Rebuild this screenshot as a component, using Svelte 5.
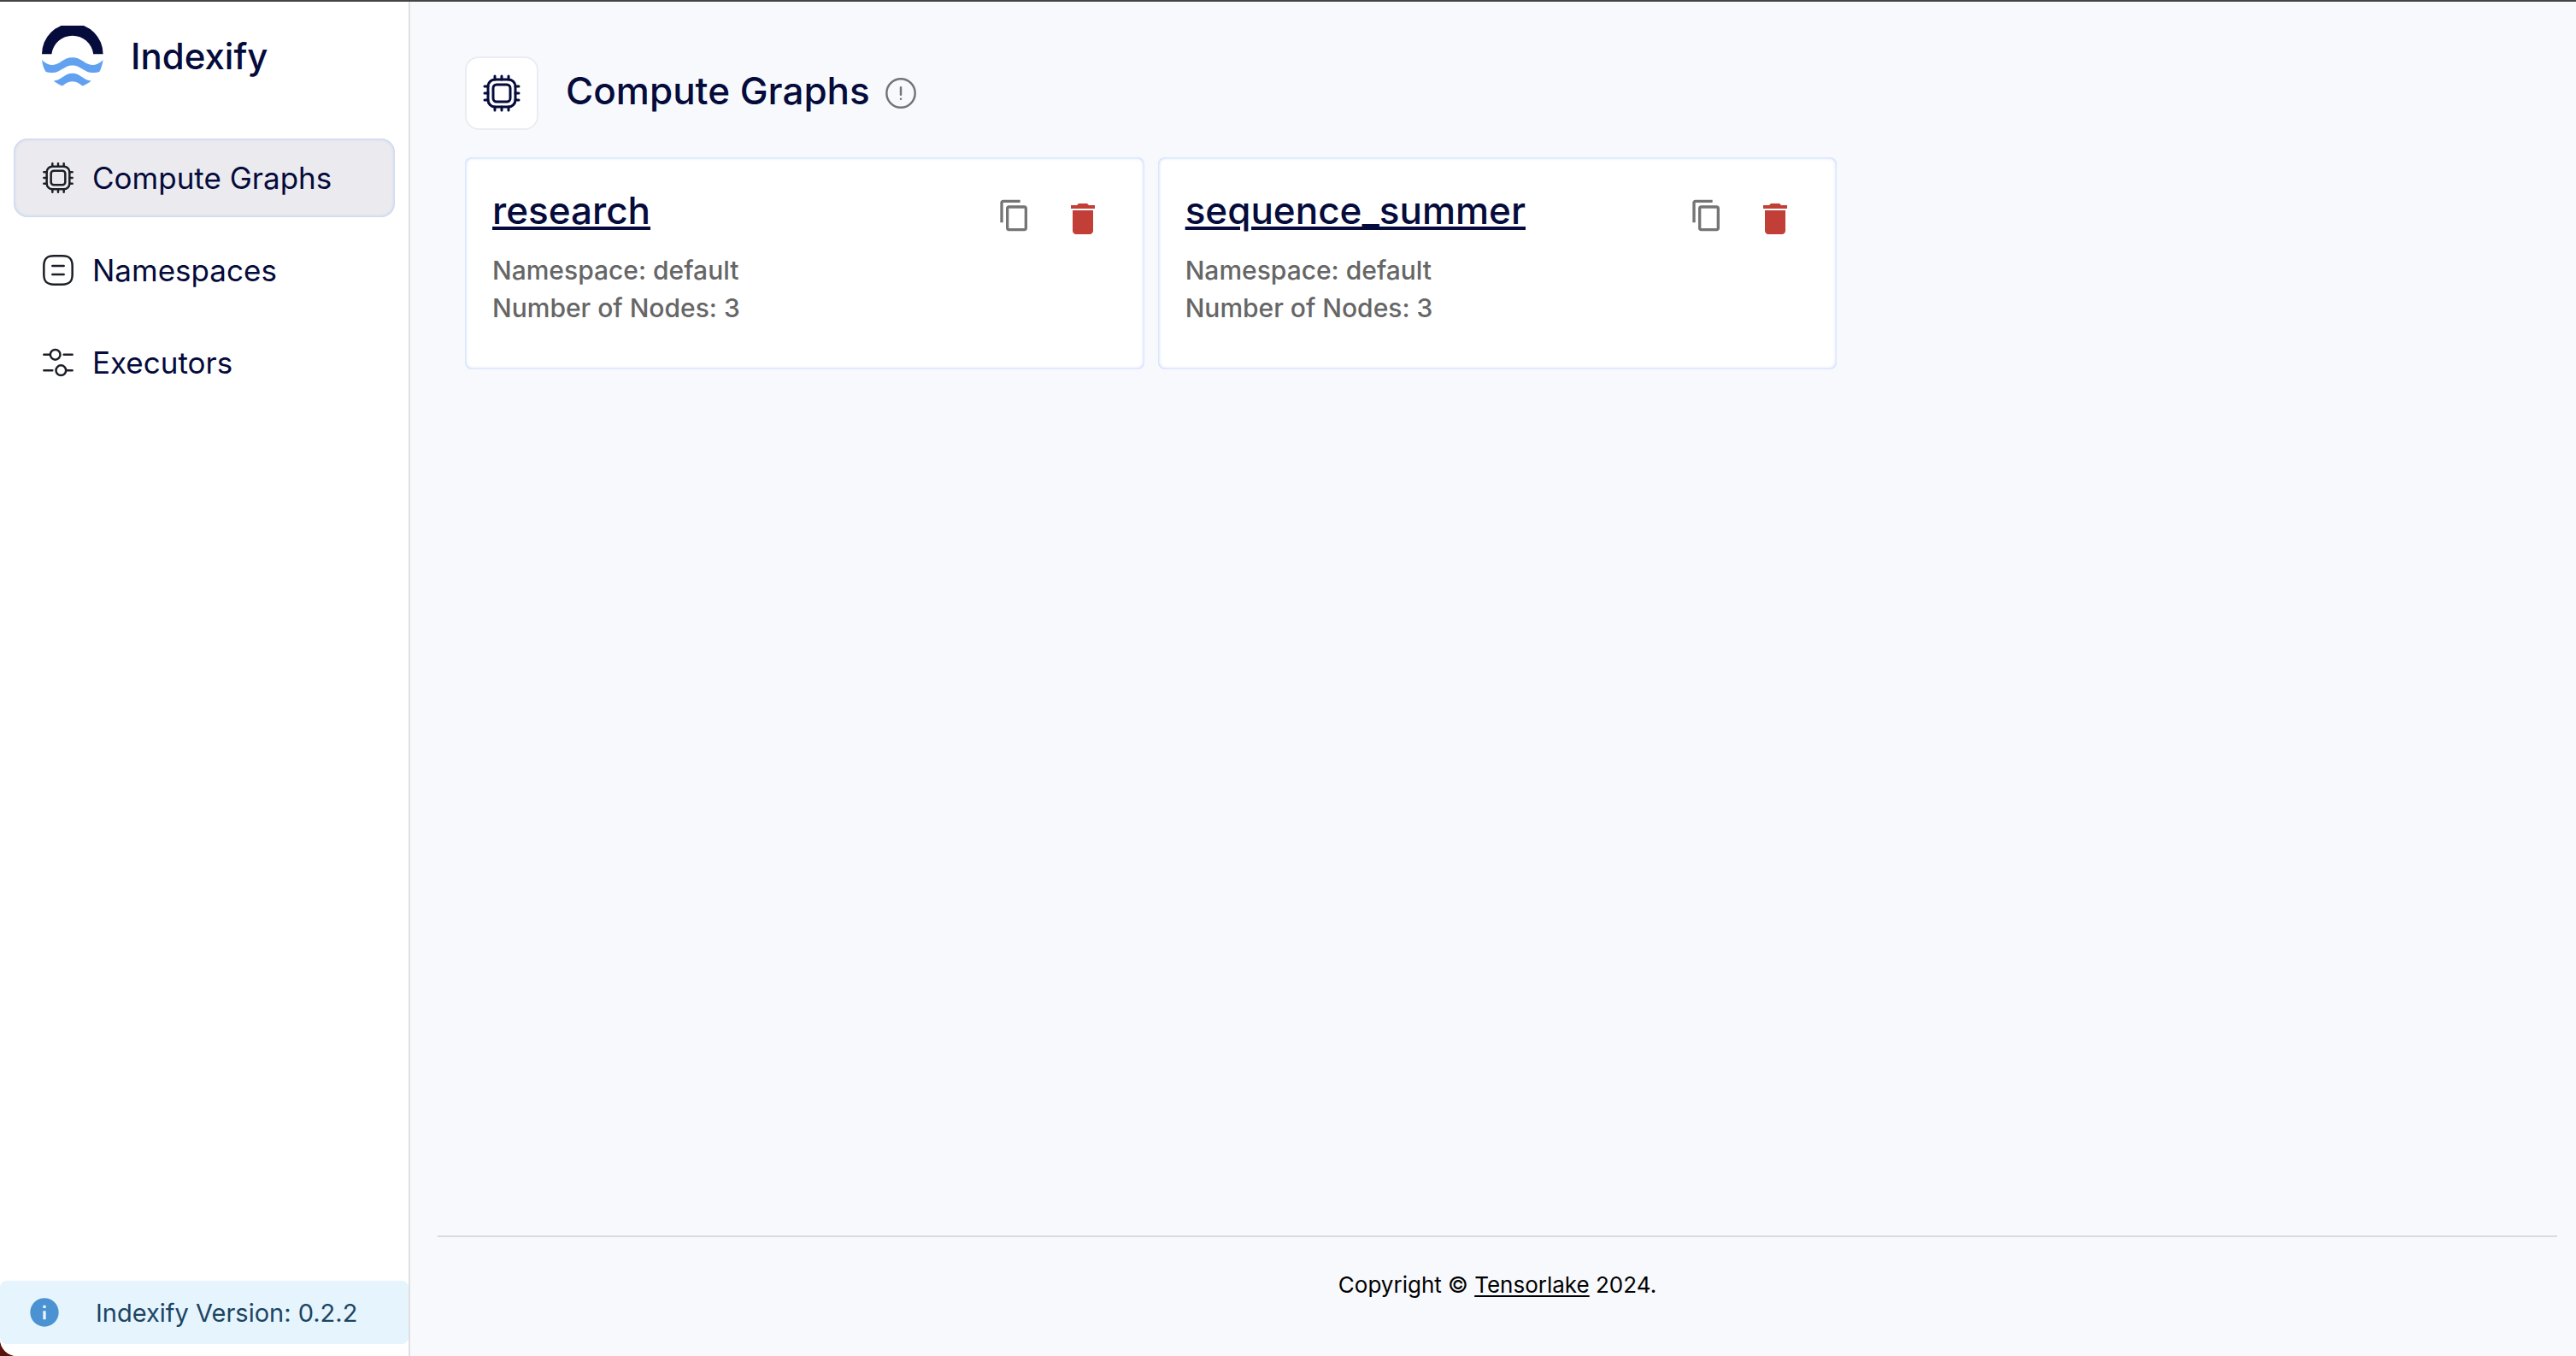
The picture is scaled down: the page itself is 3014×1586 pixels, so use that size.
<script>
  const navItems = [
    { label: 'Compute Graphs', icon: 'cpu', active: true },
    { label: 'Namespaces', icon: 'list', active: false },
    { label: 'Executors', icon: 'sliders', active: false },
  ];

  const graphs = [
    { name: 'research', namespace: 'default', nodes: 3 },
    { name: 'sequence_summer', namespace: 'default', nodes: 3 },
  ];

  const version = '0.2.2';
</script>

{#snippet lineIcon(name)}
  <svg class="line-icon" viewBox="0 0 24 24" aria-hidden="true">
    {#if name === 'cpu'}
      <rect x="4" y="4" width="16" height="16" rx="4" />
      <rect x="7" y="7" width="10" height="10" rx="2" />
      <path d="M8 4V2M12 4V2M16 4V2M20 8h2M20 12h2M20 16h2M16 20v2M12 20v2M8 20v2M2 8h2M2 12h2M2 16h2" />
    {:else if name === 'list'}
      <path d="M9 22h6c5 0 7-2 7-7V9c0-5-2-7-7-7H9C4 2 2 4 2 9v6c0 5 2 7 7 7z" />
      <path d="M8 9h8M8 15h8" />
    {:else if name === 'sliders'}
      <path d="M22 6.5h-6M6 6.5H2M22 17.5h-4M8 17.5H2" />
      <circle cx="10" cy="6.5" r="3.5" />
      <circle cx="14" cy="17.5" r="3.5" />
    {:else}
      <circle cx="12" cy="12" r="10" />
      <path d="M12 8v5M12 16v.01" />
    {/if}
  </svg>
{/snippet}

<div class="app">
  <aside class="sidebar">
    <a class="brand" href="#home">
      <svg class="logo" viewBox="0 0 72 72" aria-hidden="true">
        <path class="arch" d="M0 33.2A35.8 35.8 0 0 1 71.6 33.2H60.2A24.6 24.6 0 0 0 11.4 33.2Z" />
        <path class="wave" d="M0 40C4 44 8 46 12.5 46C21 46 25 37.3 35.7 37.3C46.5 37.3 50.5 46 59 46C63.5 46 67.5 44 71.5 40C71 45 69.5 50 67.5 53.7C65 54.8 62.5 55 59 55C50 55 45 46.5 35.7 46.5C26.5 46.5 21.5 55 12.5 55C9 55 7 54.8 4.5 53.7C2 50 .5 45 0 40Z" />
        <path class="wave" d="M13.7 64.6C23 64 26 55.7 35.7 55.7C45.5 55.7 48.5 64 57.8 64.6C55 67 51.5 69 47.8 70.6C44 68 41 65.2 35.7 65.2C30.5 65.2 27.5 68 23.7 70.6C20 69 16.5 67 13.7 64.6Z" />
      </svg>
      <span>Indexify</span>
    </a>

    <nav class="nav" aria-label="Main">
      {#each navItems as item}
        <a class="nav-item" class:active={item.active} href="#{item.icon}" aria-current={item.active ? 'page' : undefined}>
          {@render lineIcon(item.icon)}
          <span>{item.label}</span>
        </a>
      {/each}
    </nav>

    <div class="version" role="status">
      <svg viewBox="0 0 24 24" aria-hidden="true">
        <path d="M12 2C6.48 2 2 6.48 2 12s4.48 10 10 10 10-4.48 10-10S17.52 2 12 2zm1 15h-2v-6h2v6zm0-8h-2V7h2v2z" />
      </svg>
      <span>Indexify Version: {version}</span>
    </div>
  </aside>

  <div class="page">
    <main class="content">
      <header class="heading">
        <div class="heading-icon">{@render lineIcon('cpu')}</div>
        <h1>Compute Graphs</h1>
        <button class="info" type="button" aria-label="About compute graphs">{@render lineIcon('info')}</button>
      </header>

      <div class="grid">
        {#each graphs as graph}
          <article class="card">
            <div class="card-top">
              <h2><a href="#{graph.name}">{graph.name}</a></h2>
              <div class="actions">
                <button class="copy" type="button" aria-label="Copy {graph.name}">
                  <svg viewBox="0 0 24 24" aria-hidden="true">
                    <path d="M16 1H4c-1.1 0-2 .9-2 2v14h2V3h12V1zm3 4H8c-1.1 0-2 .9-2 2v14c0 1.1.9 2 2 2h11c1.1 0 2-.9 2-2V7c0-1.1-.9-2-2-2zm0 16H8V7h11v14z" />
                  </svg>
                </button>
                <button class="delete" type="button" aria-label="Delete {graph.name}">
                  <svg viewBox="0 0 24 24" aria-hidden="true">
                    <path d="M6 19c0 1.1.9 2 2 2h8c1.1 0 2-.9 2-2V7H6v12zM19 4h-3.5l-1-1h-5l-1 1H5v2h14V4z" />
                  </svg>
                </button>
              </div>
            </div>
            <p>Namespace: {graph.namespace}</p>
            <p>Number of Nodes: {graph.nodes}</p>
          </article>
        {/each}
      </div>
    </main>

    <footer class="footer">
      Copyright © <a href="#tensorlake">Tensorlake</a> 2024.
    </footer>
  </div>
</div>

<style>
  :global(body) {
    margin: 0;
    background: #5a130c;
  }

  .app {
    display: flex;
    box-sizing: border-box;
    min-height: 100vh;
    overflow: hidden;
    border-top: 2px solid #454545;
    border-bottom-left-radius: 20px;
    background: #f8f9fd;
    color: #050b3b;
    font-family: Inter, "Open Sans", sans-serif;
  }

  a {
    color: inherit;
  }

  button {
    display: flex;
    padding: 0;
    border: 0;
    background: none;
    cursor: pointer;
  }

  svg {
    display: block;
    flex: none;
    width: 40px;
    height: 40px;
    fill: currentColor;
  }

  .line-icon {
    fill: none;
    stroke: currentColor;
    stroke-width: 1.5;
    stroke-linecap: round;
    stroke-linejoin: round;
  }

  .sidebar {
    display: flex;
    flex: none;
    flex-direction: column;
    box-sizing: border-box;
    width: 480px;
    padding-bottom: 14px;
    border-right: 2px solid #e0e0e0;
    background: #fff;
  }

  .brand {
    display: flex;
    align-items: center;
    gap: 32px;
    padding: 28px 49px 0;
    font-size: 42px;
    font-weight: 500;
    line-height: 72px;
    text-decoration: none;
  }

  .logo {
    width: 72px;
    height: 72px;
  }

  .arch {
    fill: #050b3b;
  }

  .wave {
    fill: #62a1f0;
  }

  .nav {
    display: flex;
    flex-direction: column;
    gap: 16px;
    padding: 60px 16px;
  }

  .nav-item {
    display: flex;
    align-items: center;
    gap: 20px;
    height: 92px;
    padding: 0 32px;
    border-radius: 16px;
    font-size: 35px;
    text-decoration: none;
  }

  .nav-item .line-icon {
    color: #1c1f26;
  }

  .nav-item.active {
    background: #ebebef;
    box-shadow: inset 0 0 4px #a9c2ee;
  }

  .version {
    display: flex;
    align-items: center;
    gap: 40px;
    height: 74px;
    margin-top: auto;
    padding: 0 32px;
    border-radius: 8px;
    background: #e6f4fd;
    color: #1b4563;
    font-size: 29px;
  }

  .version svg {
    color: #4a92d2;
  }

  .page {
    display: flex;
    flex: 1;
    flex-direction: column;
    min-width: 0;
  }

  .content {
    flex: 1;
    padding: 64px 54px 64px 64px;
  }

  .heading {
    display: flex;
    align-items: center;
    margin-bottom: 32px;
  }

  .heading-icon {
    display: flex;
    align-items: center;
    justify-content: center;
    box-sizing: border-box;
    width: 86px;
    height: 86px;
    margin-right: 32px;
    border: 2px solid #e9edf1;
    border-radius: 16px;
    background: #fff;
  }

  .heading-icon .line-icon {
    width: 48px;
    height: 48px;
  }

  h1,
  h2 {
    margin: 0;
    font-size: 44px;
    font-weight: 500;
    line-height: 60px;
  }

  h1 {
    padding-bottom: 6px;
  }

  .info {
    margin-left: 16px;
    color: #757575;
  }

  .grid {
    display: grid;
    grid-template-columns: repeat(3, minmax(0, 1fr));
    gap: 16px;
  }

  .card {
    padding: 32px 32px 50px;
    border-radius: 8px;
    background: #fff;
    box-shadow: inset 0 0 4px #a5c2fb;
  }

  .card-top {
    display: flex;
    justify-content: space-between;
    margin-bottom: 14px;
  }

  h2 a {
    text-decoration-thickness: 4px;
    text-underline-offset: 3px;
  }

  .actions {
    display: flex;
    align-items: flex-start;
    gap: 36px;
    padding: 16px 16px 0 0;
  }

  .copy {
    color: #757575;
  }

  .delete {
    color: #c23f38;
  }

  .delete svg {
    width: 48px;
    height: 48px;
  }

  .card p {
    margin: 0;
    color: #666;
    font-size: 30px;
    font-weight: 500;
    line-height: 44px;
  }

  .footer {
    margin: 0 22px 0 32px;
    padding: 36px 0 63px;
    border-top: 2px solid #d9dbdf;
    color: #000;
    font-size: 26px;
    line-height: 40px;
    text-align: center;
  }

  .footer a {
    text-decoration-thickness: 2px;
    text-underline-offset: 3px;
  }
</style>
